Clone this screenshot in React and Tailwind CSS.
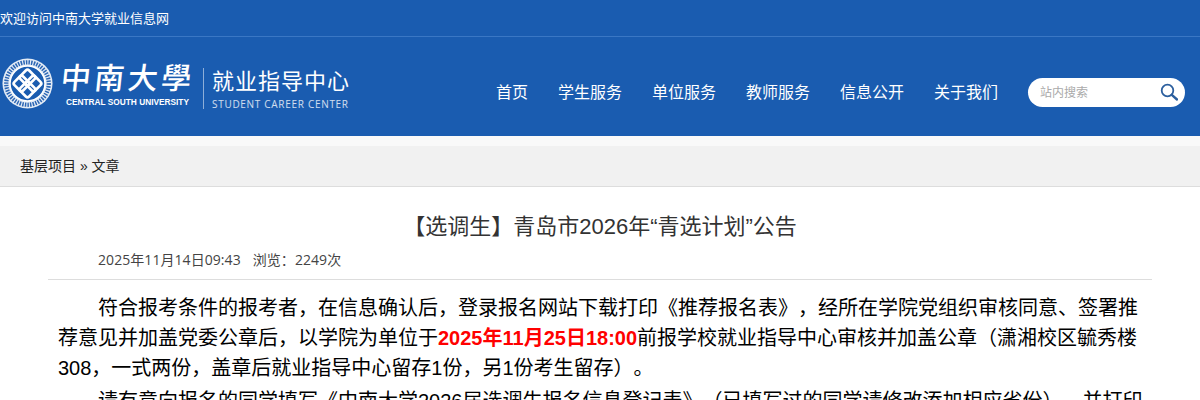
import React from 'react';

const navItems = ['首页', '学生服务', '单位服务', '教师服务', '信息公开', '关于我们'];

const Emblem = () => (
  <svg width="51" height="51" viewBox="0 0 54 54" className="shrink-0 ml-[2px]">
    <circle cx="27" cy="27" r="26.5" fill="#e3ebf5" />
    <circle cx="27" cy="27" r="22.5" fill="none" stroke="#2c66b4" strokeWidth="4.5" strokeDasharray="1.6 1.2" />
    <circle cx="27" cy="27" r="18.5" fill="#1a5cb0" stroke="#ffffff" strokeWidth="1.5" />
    <g fill="none" stroke="#ffffff" strokeWidth="2.8" transform="rotate(45 27 27)">
      <rect x="16" y="16" width="13" height="13" rx="2.5" />
      <rect x="25" y="25" width="13" height="13" rx="2.5" />
      <rect x="25" y="16" width="13" height="13" rx="2.5" />
      <rect x="16" y="25" width="13" height="13" rx="2.5" />
    </g>
  </svg>
);

const Logo = () => (
  <div className="flex items-center w-[350px] shrink-0 text-white mb-[6px]">
    <Emblem />
    <div className="flex flex-col items-center ml-[11px] w-[127px] shrink-0">
      <div className="text-[30px] leading-[36px] tracking-[3.5px] font-medium -skew-x-6 whitespace-nowrap">中南大學</div>
      <div className="text-[8.3px] leading-[12px] font-['Liberation_Sans',sans-serif] font-bold whitespace-nowrap">CENTRAL SOUTH UNIVERSITY</div>
    </div>
    <div className="w-px h-[41px] bg-white/50 ml-[12px] mt-[10px] mr-[8px] shrink-0" />
    <div className="flex flex-col pt-[10px]">
      <div className="text-[22px] leading-[28px] tracking-[1px] whitespace-nowrap">就业指导中心</div>
      <div className="text-[10px] leading-[14px] tracking-[0.7px] mt-[3px] whitespace-nowrap text-white/80">STUDENT CAREER CENTER</div>
    </div>
  </div>
);

const App = () => {
  return (
    <div className="h-[400px] overflow-hidden bg-white font-['Open_Sans','Noto_Sans_CJK_SC',sans-serif] text-[#333] [text-spacing-trim:space-all]">
      <header className="bg-[#1a5cb0] h-[136px]">
        <div className="h-[37px] border-b border-[#3a77c4] text-[13px] leading-[37px] text-white">欢迎访问中南大学就业信息网</div>
        <div className="h-[99px] flex items-center">
          <Logo />
          <nav className="flex items-center gap-[30px] ml-[146px] mt-[10px] text-white text-base whitespace-nowrap">
            {navItems.map((item) => (
              <a key={item} href="#">{item}</a>
            ))}
          </nav>
          <div className="ml-[30px] mt-[12px] w-[157px] h-[29px] rounded-full bg-white flex items-center justify-between pl-3 pr-[7px]">
            <span className="text-xs text-[#aaa]">站内搜索</span>
            <svg width="18" height="18" viewBox="0 0 18 18" fill="none" stroke="#2c5f9e" strokeWidth="1.8" className="mb-[2px]">
              <circle cx="7.5" cy="7.5" r="5.8" />
              <path d="M11.8 11.8 L17 16.5" strokeWidth="2.4" strokeLinecap="round" />
            </svg>
          </div>
        </div>
      </header>

      <div className="bg-[#f9f9f9] pt-[10px]">
        <div className="h-[41px] bg-[#f1f1f1] border-b border-[#ddd] pl-5 text-sm leading-[40px] text-[#222] font-['Liberation_Sans','Noto_Sans_CJK_SC',sans-serif]">基层项目 » 文章</div>
      </div>

      <main className="px-12">
        <h1 className="mt-[24px] text-center text-[22px] leading-[32px] font-normal text-[#333] font-['Liberation_Sans','Noto_Sans_CJK_SC',sans-serif]">【选调生】青岛市2026年“青选计划”公告</h1>
        <div className="h-[37px] border-b border-[#ddd] pl-[50px] text-sm leading-[34px] text-[#444] tracking-[0.06px]">
          2025年11月14日09:43<span className="ml-3">浏览：2249次</span>
        </div>
        <div className="pl-[10px] pr-[5px] pt-[13px] text-[20px] leading-[30px] text-black font-['Liberation_Sans','Noto_Sans_CJK_SC',sans-serif]">
          <p className="indent-[40px]">
            符合报考条件的报考者，在信息确认后，登录报名网站下载打印《推荐报名表》，经所在学院党组织审核同意、签署推荐意见并加盖党委公章后，以学院为单位于<strong className="text-[#ff0000] font-bold">2025年11月25日18:00</strong>前报学校就业指导中心审核并加盖公章（潇湘校区毓秀楼308，一式两份，盖章后就业指导中心留存1份，另1份考生留存）。
          </p>
          <p className="indent-[40px] mt-[3px]">
            请有意向报名的同学填写《中南大学2026届选调生报名信息登记表》（已填写过的同学请修改添加相应省份），并打印
          </p>
        </div>
      </main>
    </div>
  );
};

export default App;
